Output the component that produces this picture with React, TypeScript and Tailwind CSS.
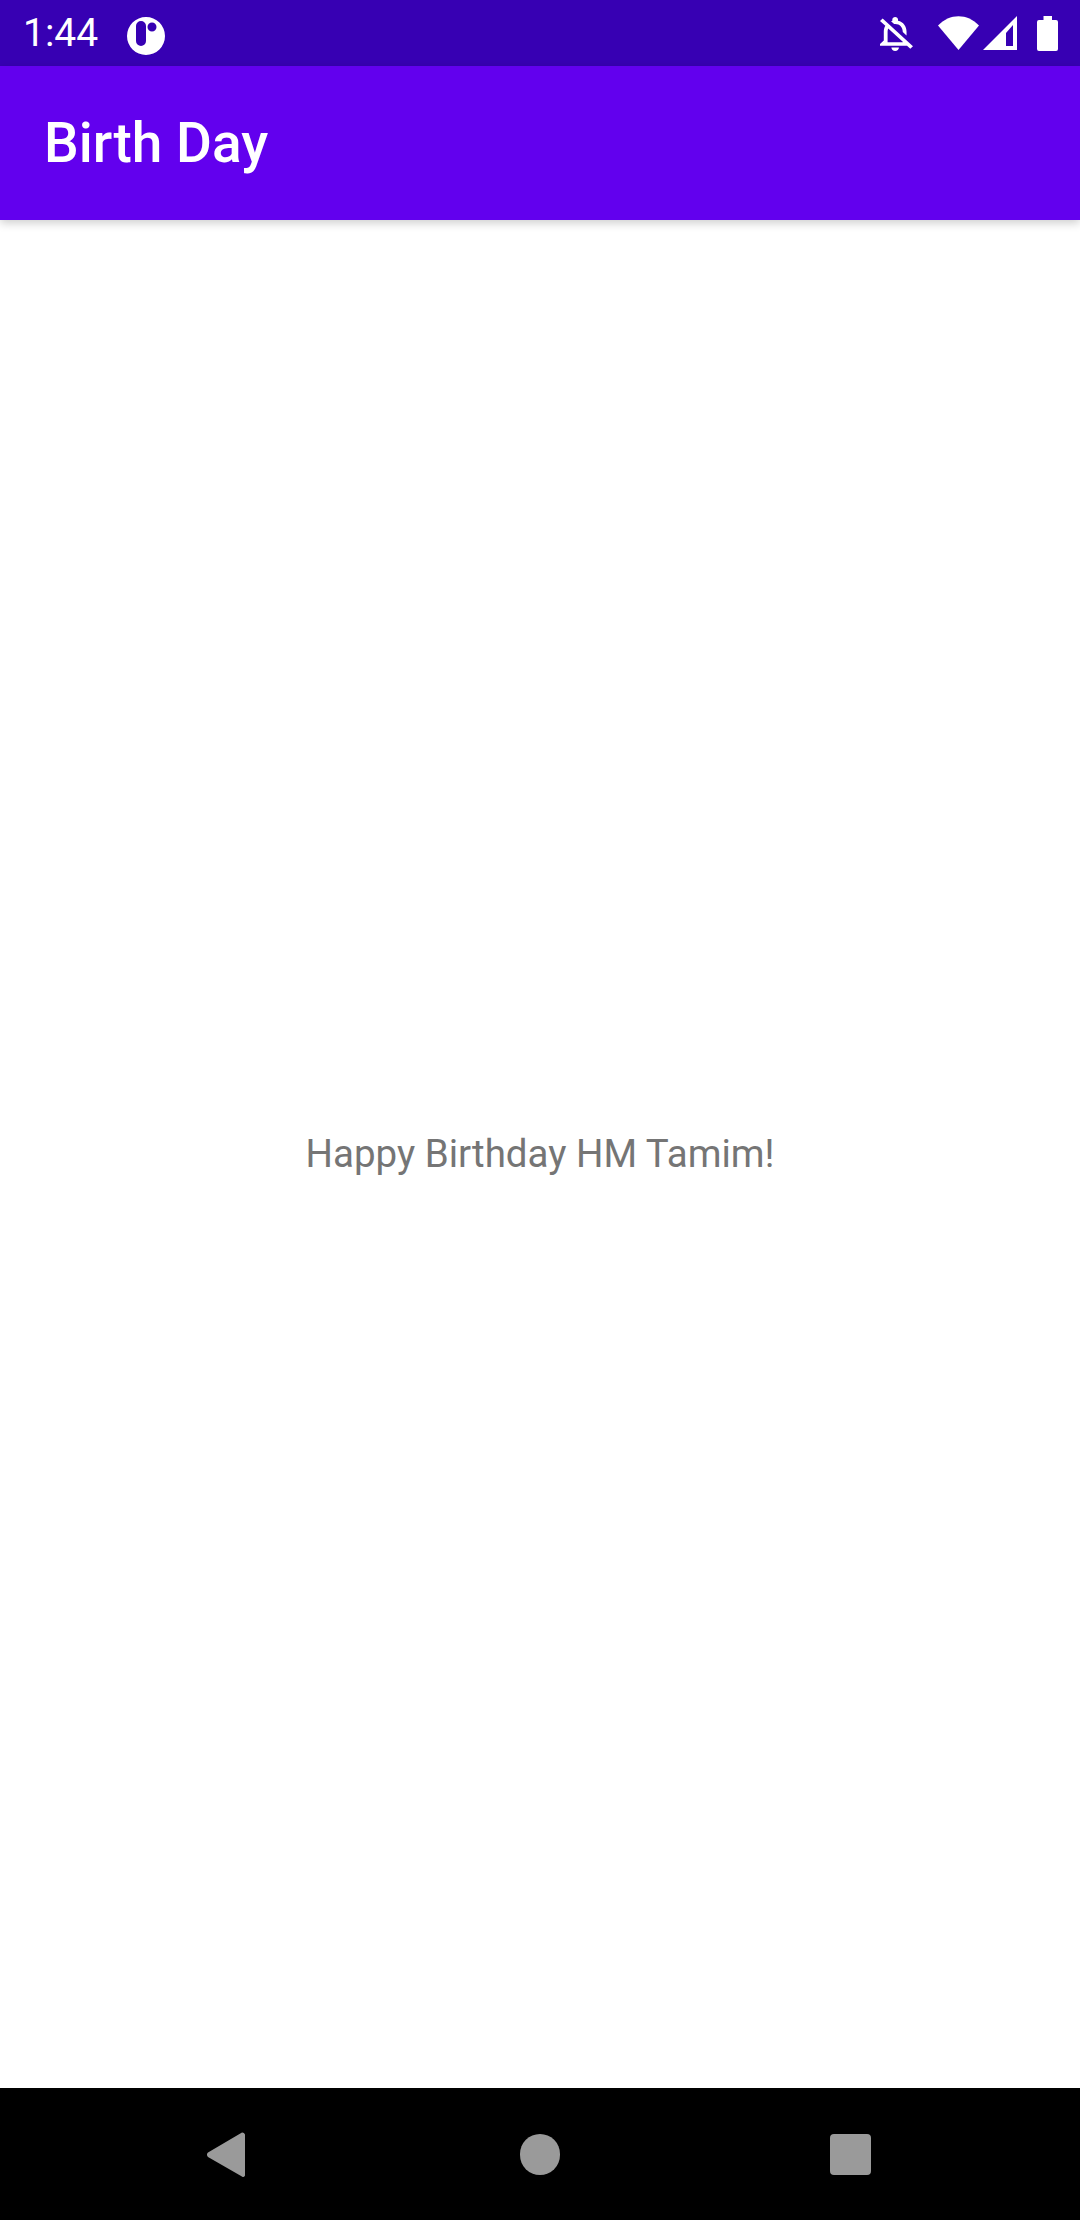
export default function App() {
  return (
    <div className="flex h-[2220px] w-[1080px] flex-col overflow-hidden bg-white font-['Roboto',sans-serif]">
      {/* Status bar */}
      <div className="flex h-[66px] shrink-0 items-center bg-[#3700B3] pl-[23px] text-white">
        <span className="w-[104px] text-[39px] leading-none">1:44</span>
        <svg width="38" height="38" viewBox="0 0 38 38" className="mt-[6px]">
          <path
            fillRule="evenodd"
            fill="#fff"
            d="M19 0a19 19 0 1 1 0 38a19 19 0 1 1 0-38zM14 4a5 5 0 0 0-5 5v15a5 5 0 0 0 10 0V9a5 5 0 0 0-5-5zM25 5.500a4.500 4.500 0 1 0 0 9a4.500 4.500 0 1 0 0-9z"
          />
        </svg>
        <div className="ml-auto flex items-start pr-[22px]">
          <svg width="33" height="34" viewBox="4 2.500 17.400 19.500" preserveAspectRatio="none" className="mt-[1px]">
            <path
              fill="#fff"
              d="M12 22c1.100 0 2-.9 2-2h-4c0 1.100.9 2 2 2zm0-15.500c2.490 0 4 2.020 4 4.500v.1l2 2V11c0-3.080-1.640-5.640-4.500-6.320V4c0-.83-.67-1.500-1.500-1.500s-1.500.67-1.500 1.500v.68c-.24.06-.47.15-.69.23l1.640 1.640c.18-.02.37-.05.55-.05zM5.410 3.350L4 4.760l2.810 2.810C6.290 8.570 6 9.740 6 11v5l-2 2v1h14.240l1.740 1.740 1.410-1.410L5.410 3.350zM16 17H8v-6c0-.68.12-1.320.34-1.900L16 16.760V17z"
            />
          </svg>
          <svg width="41" height="34" viewBox="0 0 41 34" className="ml-[25px]">
            <path fill="#fff" d="M0 9.500C11.500-3 29.500-3 41 9.500L20.500 34Z" />
          </svg>
          <svg width="34" height="34" viewBox="0 0 34 34" className="ml-[4px]">
            <path fillRule="evenodd" fill="#fff" d="M0 34L34 0V34ZM23 30H30V9L23 17Z" />
          </svg>
          <svg width="21" height="35" viewBox="0 0 21 35" className="ml-[20px]">
            <path
              fill="#fff"
              d="M6.500 0H15V4H19A2 2 0 0 1 21 6V33A2 2 0 0 1 19 35H2A2 2 0 0 1 0 33V6A2 2 0 0 1 2 4H6.500Z"
            />
          </svg>
        </div>
      </div>

      {/* App bar */}
      <div className="relative z-10 flex h-[154px] shrink-0 items-center bg-[#6200EE] pl-[44px] shadow-[0_3px_9px_rgba(0,0,0,0.2)]">
        <h1 className="text-[55px] leading-none font-medium text-white">Birth Day</h1>
      </div>

      {/* Content */}
      <main className="flex flex-1 items-center justify-center">
        <p className="text-[38.500px] leading-none text-[#757575]">Happy Birthday HM Tamim!</p>
      </main>

      {/* Navigation bar */}
      <div className="flex h-[132px] shrink-0 items-center bg-black pl-[207px]">
        <svg width="38" height="45" viewBox="0 0 38 45">
          <path fill="#9a9a9a" d="M35 .5A3 3 0 0 1 38 2.500V42.500A2 2 0 0 1 34.500 44.200L1 25A3 3 0 0 1 1 20.500Z" />
        </svg>
        <div className="ml-[275px] h-[41px] w-[40px] rounded-full bg-[#9a9a9a]" />
        <div className="ml-[270px] h-[41px] w-[41px] rounded-[4px] bg-[#9a9a9a]" />
      </div>
    </div>
  )
}
